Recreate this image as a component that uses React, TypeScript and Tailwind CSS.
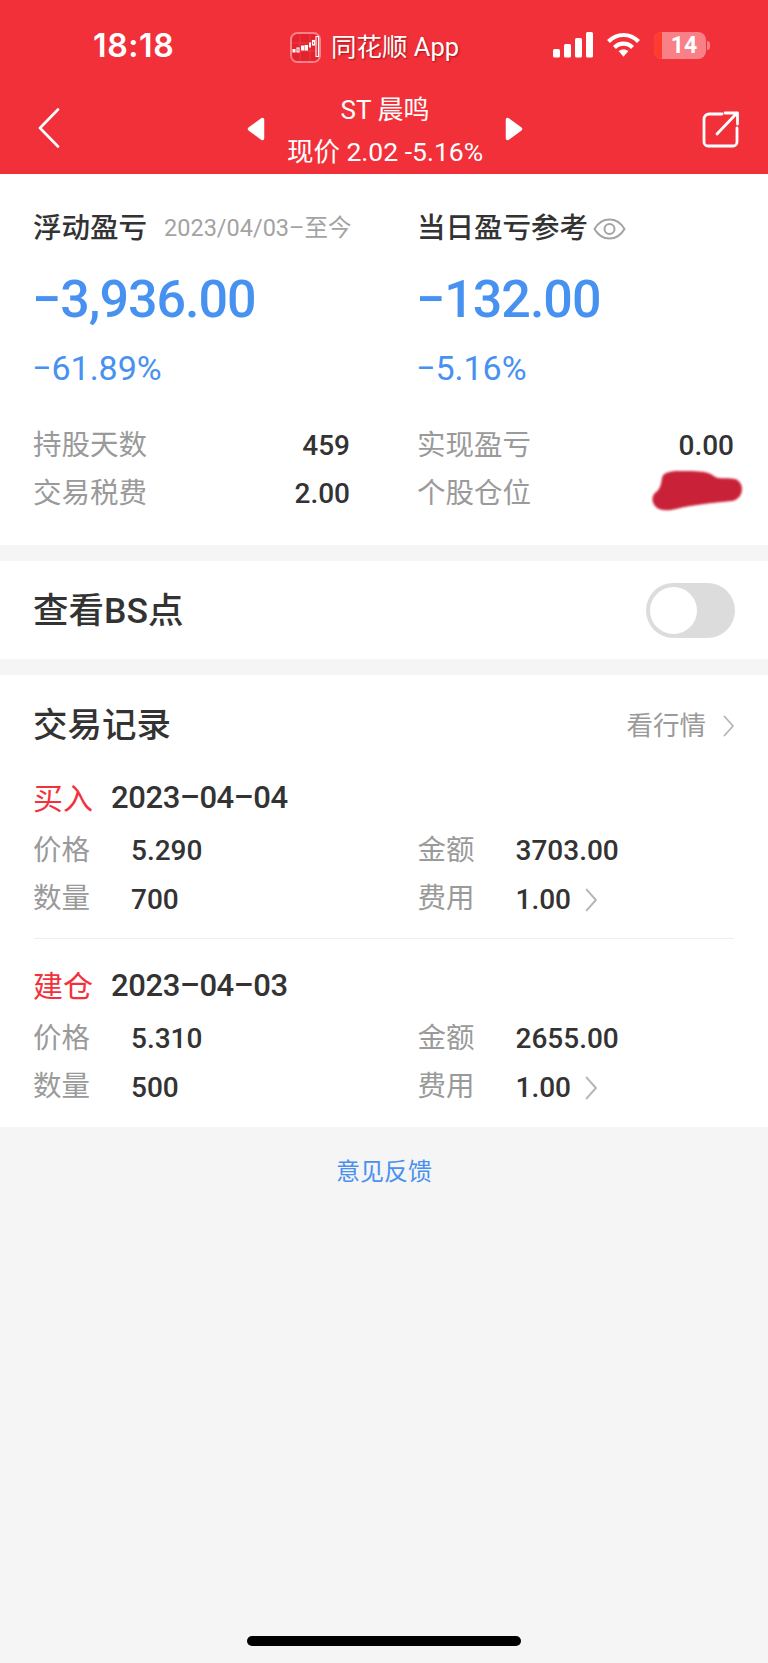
import React from "react";

function Signal() {
  return (
    <svg width="40" height="26" viewBox="0 0 40 26" fill="#fff">
      <rect x="0" y="17" width="7" height="8.5" rx="1.5" />
      <rect x="11" y="12" width="7" height="13.5" rx="1.5" />
      <rect x="22" y="6" width="7" height="19.5" rx="1.5" />
      <rect x="33" y="0" width="7" height="25.5" rx="1.5" />
    </svg>
  );
}

function Wifi() {
  return (
    <svg width="35" height="26" viewBox="0 0 35 26" fill="none" stroke="#fff" strokeWidth="4.2">
      <path d="M2.5 9.5C6.5 5.5 11.5 3 17.5 3s11 2.5 15 6.5" />
      <path d="M8.5 15.5c2.4-2.4 5.5-3.8 9-3.8s6.6 1.4 9 3.8" />
      <path d="M12.6 19l4.9 5.8 4.9-5.8c-1.3-1-3-1.6-4.9-1.6s-3.6.6-4.9 1.6z" fill="#fff" stroke="none" />
    </svg>
  );
}

function Battery() {
  return (
    <div className="flex items-center">
      <div className="flex h-[27px] w-[52px] overflow-hidden rounded-[8px] bg-[#f98087]">
        <div className="h-full w-[8px] bg-[#ff3b30]" />
        <div className="flex-1 text-center text-[23px] font-bold leading-[27px] text-white">14</div>
      </div>
      <div className="ml-[1px] h-[9px] w-[3px] rounded-r-full bg-[#f98087]" />
    </div>
  );
}

function AppIcon() {
  return (
    <svg width="31" height="31" viewBox="0 0 31 31" fill="none">
      <rect x="1" y="1" width="29" height="29" rx="6.5" fill="#e3242f" stroke="#f98087" strokeWidth="2" />
      <path d="M2 11h27M2 19h27M10 2v27M20 2v27" stroke="#ee4a52" strokeWidth="0.6" />
      <g fill="#fff">
        <rect x="2.5" y="17" width="3" height="3.5" />
        <rect x="11" y="13.5" width="3" height="5" />
        <rect x="19" y="10.5" width="2" height="5" />
      </g>
      <g fill="none" stroke="#fff" strokeWidth="1.1">
        <rect x="7" y="16" width="2" height="4" />
        <rect x="15" y="13.5" width="2.5" height="4.5" fill="#fff" />
        <rect x="22.5" y="8.5" width="2" height="4.5" />
        <rect x="26" y="4.5" width="2.5" height="20" />
      </g>
    </svg>
  );
}

function Back() {
  return (
    <svg width="22" height="40" viewBox="0 0 22 40" fill="none" stroke="#fff" strokeWidth="2.6" strokeLinecap="round" strokeLinejoin="round" className="mb-[8px]">
      <path d="M20 1.5L2 20l18 18.5" />
    </svg>
  );
}

function Tri({ right }: { right?: boolean }) {
  return (
    <svg width="18" height="24" viewBox="0 0 18 24" fill="#fff" stroke="#fff" strokeWidth="3.5" strokeLinejoin="round" className="mb-[6px]">
      <path d={right ? "M2.5 2.5V21.5L15.5 12z" : "M15.5 2.5V21.5L2.5 12z"} />
    </svg>
  );
}

function Share() {
  return (
    <svg width="37" height="37" viewBox="0 0 37 37" fill="none" stroke="#fff" strokeWidth="2.8" strokeLinecap="round" strokeLinejoin="round" className="mb-[6px]">
      <path d="M20 3H7a5 5 0 0 0-5 5v23a4 4 0 0 0 4 4h25a4 4 0 0 0 4-4V17" />
      <path d="M15 23L34 3M23 2h12.5v11" />
    </svg>
  );
}

function Eye() {
  return (
    <svg width="33" height="22" viewBox="0 0 33 22" fill="none" stroke="#a3a3a3" strokeWidth="2">
      <path d="M1.5 11C5 5 10 1.5 16.5 1.5S28 5 31.5 11C28 17 23 20.5 16.5 20.5S5 17 1.5 11z" />
      <circle cx="16.5" cy="11" r="5" />
    </svg>
  );
}

function Chevron({ h = 22 }: { h?: number }) {
  return (
    <svg width={h / 2} height={h} viewBox="0 0 11 22" fill="none" stroke="#b5b5b5" strokeWidth="1.8" strokeLinecap="round" strokeLinejoin="round">
      <path d="M1.5 1.5L10 11 1.5 20.5" />
    </svg>
  );
}

function Blob() {
  return (
    <svg width="92" height="44" viewBox="0 0 92 44" className="-mt-[4px] -mr-[10px] overflow-visible">
      <defs>
        <filter id="blur-blob" x="-10%" y="-20%" width="120%" height="140%">
          <feGaussianBlur stdDeviation="1.2" />
        </filter>
      </defs>
      <path
        filter="url(#blur-blob)"
        fill="#c92139"
        d="M10 8C11 3 17 1 26 1C38 1 50 1 56 3C60 4 62 7 66 8C72 8.5 78 8 83 9C88 11 90 15 90 19C90 25 86 30 80 31C60 33 40 35 24 39C15 41 7 41 3 36C-1 31 0 25 4 22C7 20 9 16 10 8Z"
      />
    </svg>
  );
}

function Stat({ label, value, blob }: { label: string; value?: string; blob?: boolean }) {
  return (
    <div className="flex h-[48px] items-center justify-between">
      <span className="-ml-[1px] text-[28.5px] text-[#9a9a9a]">{label}</span>
      {blob ? <Blob /> : <span className="text-[28px] font-medium text-[#333]">{value}</span>}
    </div>
  );
}

function Field({ label, value, more }: { label: string; value: string; more?: boolean }) {
  return (
    <div className="flex h-[48.5px] items-center">
      <span className="-ml-[1px] w-[98px] text-[28.5px] text-[#9a9a9a]">{label}</span>
      <span className="text-[28px] font-medium text-[#333]">{value}</span>
      {more && (
        <span className="ml-[14px]">
          <Chevron h={24} />
        </span>
      )}
    </div>
  );
}

function Trade({ kind, date, price, amount, qty, fee }: { kind: string; date: string; price: string; amount: string; qty: string; fee: string }) {
  return (
    <div>
      <div className="flex h-[40px] items-center">
        <span className="-ml-[1px] w-[78px] text-[30px] text-[#f4313b]">{kind}</span>
        <span className="text-[31px] font-medium tracking-[-0.4px] text-[#333]">{date}</span>
      </div>
      <div className="mt-[9px] grid grid-cols-2 gap-x-[69px]">
        <Field label="价格" value={price} />
        <Field label="金额" value={amount} />
        <Field label="数量" value={qty} />
        <Field label="费用" value={fee} more />
      </div>
    </div>
  );
}

export default function App() {
  return (
    <div className="flex h-[1663px] w-[768px] flex-col overflow-hidden bg-[#f5f5f5] font-['Roboto','Noto_Sans_CJK_SC',sans-serif]">
      <header className="h-[174px] bg-[#f2303a] text-white">
        <div className="flex h-[90px] items-center">
          <span className="mt-[2px] ml-[93px] w-[80px] font-['Inter',sans-serif] text-[32px] font-semibold tracking-[0.6px]">18:18</span>
          <span className="mt-[4px] ml-[117px]"><AppIcon /></span>
          <span className="mt-[4px] ml-[10px] w-[127px] whitespace-nowrap text-[25.5px] [text-shadow:1px_1px_2px_rgba(110,0,0,0.6)]">同花顺 App</span>
          <span className="ml-[95px]"><Signal /></span>
          <span className="ml-[13px]"><Wifi /></span>
          <span className="ml-[13px]"><Battery /></span>
        </div>
        <div className="flex h-[84px] items-center">
          <span className="ml-[38px]"><Back /></span>
          <span className="ml-[187px]"><Tri /></span>
          <div className="w-[240px] self-stretch text-center">
            <div className="h-[40px] text-[26px] leading-[40px]">ST 晨鸣</div>
            <div className="h-[43px] whitespace-nowrap text-[26.5px] leading-[43px]">现价 2.02 -5.16%</div>
          </div>
          <Tri right />
          <span className="ml-[179px]"><Share /></span>
        </div>
      </header>

      <section className="grid grid-cols-2 gap-x-[68px] bg-white px-[34px] pt-[35px] pb-[27px]">
        <div>
          <div className="flex h-[40px] items-center">
            <span className="-ml-[1px] shrink-0 whitespace-nowrap text-[28.5px] font-medium text-[#333]">浮动盈亏</span>
            <span className="ml-[17px] shrink-0 whitespace-nowrap text-[23.5px] text-[#a3a3a3]">2023/04/03–至今</span>
          </div>
          <div className="mt-[21px] -ml-[2px] h-[60px] text-[52px] font-medium leading-[60px] tracking-[-1px] text-[#4791f0]">−3,936.00</div>
          <div className="mt-[16px] -ml-[2px] h-[44px] text-[34px] leading-[44px] text-[#4791f0]">−61.89%</div>
          <div className="mt-[32px]">
            <Stat label="持股天数" value="459" />
            <Stat label="交易税费" value="2.00" />
          </div>
        </div>
        <div>
          <div className="flex h-[40px] items-center">
            <span className="-ml-[1px] shrink-0 whitespace-nowrap text-[28.5px] font-medium text-[#333]">当日盈亏参考</span>
            <span className="ml-[5px]"><Eye /></span>
          </div>
          <div className="mt-[21px] -ml-[2px] h-[60px] text-[52px] font-medium leading-[60px] tracking-[-1px] text-[#4791f0]">−132.00</div>
          <div className="mt-[16px] -ml-[2px] h-[44px] text-[34px] leading-[44px] text-[#4791f0]">−5.16%</div>
          <div className="mt-[32px]">
            <Stat label="实现盈亏" value="0.00" />
            <Stat label="个股仓位" blob />
          </div>
        </div>
      </section>

      <section className="mt-[16px] flex h-[98px] items-center justify-between bg-white pr-[33px] pl-[34px]">
        <span className="-ml-[1px] mt-[4px] text-[35.5px] font-medium text-[#333]">查看BS点</span>
        <div className="flex h-[55px] w-[89px] items-center rounded-full bg-[#dcdcdc] pl-[4px]">
          <div className="h-[47px] w-[47px] rounded-full bg-white" />
        </div>
      </section>

      <section className="mt-[16px] bg-white px-[34px] pt-[29px] pb-[15px]">
        <div className="flex h-[44px] items-center justify-between">
          <span className="-ml-[1px] text-[34.5px] font-medium text-[#333]">交易记录</span>
          <span className="flex items-center">
            <span className="text-[26.5px] text-[#9a9a9a]">看行情</span>
            <span className="ml-[17px]"><Chevron /></span>
          </span>
        </div>
        <div className="mt-[30px]">
          <Trade kind="买入" date="2023–04–04" price="5.290" amount="3703.00" qty="700" fee="1.00" />
        </div>
        <div className="mt-[14px] mb-[27px] h-px bg-[#efefef]" />
        <Trade kind="建仓" date="2023–04–03" price="5.310" amount="2655.00" qty="500" fee="1.00" />
      </section>

      <div className="mt-[27px] text-center text-[24px] leading-[36px] text-[#4a90ee]">意见反馈</div>

      <div className="flex flex-1 items-end justify-center pb-[17px]">
        <div className="h-[10px] w-[274px] rounded-full bg-black" />
      </div>
    </div>
  );
}
